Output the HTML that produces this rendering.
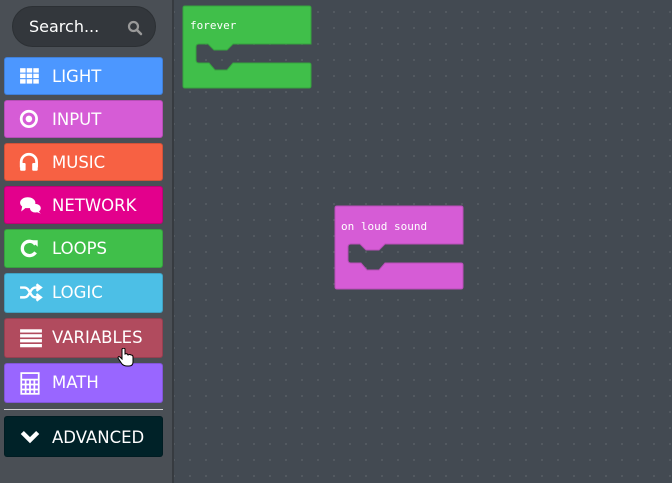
<!DOCTYPE html>
<html><head><meta charset="utf-8"><style>
body{margin:0;width:672px;height:483px;overflow:hidden;background:#434950;font-family:"Liberation Sans","DejaVu Sans",sans-serif;position:relative}
#side{position:absolute;left:0;top:0;width:172px;height:483px;background:#4a4f55;border-right:2px solid #373b40}
#ws{position:absolute;left:174px;top:0;right:0;bottom:0;background-color:#434a52;background-image:radial-gradient(circle,#575d64 0.8px,transparent 1.1px);background-size:16px 16px;background-position:8px 4px}
.search{position:absolute;left:12px;top:6px;width:144px;height:41px;border-radius:21px;background:#33373c;border:1px solid #2c3034;box-sizing:border-box;color:#fff;font-size:16px;line-height:39px;padding-left:16px;font-family:"DejaVu Sans",sans-serif}
.btn{position:absolute;left:4px;width:159px;height:38px;border-radius:3px;color:#fff;font-size:16.5px;line-height:38px;box-sizing:border-box;border:1px solid rgba(0,0,0,.15);font-family:"DejaVu Sans",sans-serif}
.btn span{position:absolute;left:47px}
.btn svg{position:absolute;left:14px;top:8px}
.sep{position:absolute;left:4px;top:409px;width:159px;height:1px;background:#d0d0d0}
.code{font-family:"DejaVu Sans Mono","Liberation Mono",monospace;font-size:11px;fill:#fff}
</style></head><body>
<div id="side">
<div class="search">Search...
<svg style="position:absolute;left:114px;top:13px" width="16" height="16" viewBox="0 0 16 16"><circle cx="6.5" cy="6.5" r="4.5" fill="none" stroke="#999" stroke-width="2.2"/><line x1="10" y1="10" x2="14" y2="14" stroke="#999" stroke-width="2.5" stroke-linecap="round"/></svg></div>
<div class="btn" style="top:57px;background:#4c97ff"><svg width="22" height="22" viewBox="0 0 20 20" fill="#fff"><rect x="1" y="2" width="5" height="4"/><rect x="7" y="2" width="5" height="4"/><rect x="13" y="2" width="5" height="4"/><rect x="1" y="7" width="5" height="4"/><rect x="7" y="7" width="5" height="4"/><rect x="13" y="7" width="5" height="4"/><rect x="1" y="12" width="5" height="4"/><rect x="7" y="12" width="5" height="4"/><rect x="13" y="12" width="5" height="4"/></svg><span>LIGHT</span></div>
<div class="btn" style="top:100px;background:#d65cd6"><svg width="22" height="22" viewBox="0 0 20 20"><circle cx="9" cy="9" r="7" fill="none" stroke="#fff" stroke-width="2.5"/><circle cx="9" cy="9" r="3" fill="#fff"/></svg><span>INPUT</span></div>
<div class="btn" style="top:143px;background:#f76143"><svg width="22" height="22" viewBox="0 0 20 20"><path d="M2,14 V9 A7,7 0 0 1 16,9 V14" fill="none" stroke="#fff" stroke-width="2.5"/><rect x="1" y="10" width="5" height="7" rx="1" fill="#fff"/><rect x="12" y="10" width="5" height="7" rx="1" fill="#fff"/></svg><span>MUSIC</span></div>
<div class="btn" style="top:186px;background:#e3008c"><svg width="24" height="22" viewBox="0 0 22 20" fill="#fff"><ellipse cx="8" cy="7" rx="7" ry="5"/><path d="M3,10 L2,15 L7,11Z"/><ellipse cx="15" cy="12" rx="5" ry="4"/><path d="M17,14 L20,17 L15,15Z"/></svg><span>NETWORK</span></div>
<div class="btn" style="top:229px;height:39px;background:#40bf4a"><svg width="22" height="22" viewBox="0 0 20 20"><path d="M15,6 A6.5,6.5 0 1 0 15,13" fill="none" stroke="#fff" stroke-width="3"/><path d="M11,2 L17,2 L17,8Z" fill="#fff"/></svg><span>LOOPS</span></div>
<div class="btn" style="top:273px;height:40px;background:#4cbfe6"><svg width="24" height="22" viewBox="0 0 22 20" fill="none" stroke="#fff" stroke-width="2.2"><path d="M1,5 H5 C10,5 10,14 15,14 H18"/><path d="M1,14 H5 C10,14 10,5 15,5 H18"/><path d="M16,2 L20,5 L16,8 M16,11 L20,14 L16,17" fill="#fff"/></svg><span>LOGIC</span></div>
<div class="btn" style="top:318px;height:40px;background:#b14b5e"><svg width="24" height="22" viewBox="0 0 22 20" fill="#fff"><rect x="1" y="2" width="20" height="3"/><rect x="1" y="6.5" width="20" height="3"/><rect x="1" y="11" width="20" height="3"/><rect x="1" y="15.5" width="20" height="3"/></svg><span>VARIABLES</span></div>
<div class="btn" style="top:363px;height:40px;background:#9966ff"><svg width="22" height="24" viewBox="0 0 20 22" fill="none" stroke="#fff" stroke-width="1.6"><rect x="2" y="1" width="16" height="19"/><path d="M2,7 H18 M2,11.5 H18 M2,16 H18 M6,7 V20 M10,7 V20 M14,7 V20"/></svg><span>MATH</span></div>
<div class="sep"></div>
<div class="btn" style="top:416px;height:41px;line-height:41px;background:#002228"><svg width="22" height="22" viewBox="0 0 20 20" style="top:10px"><path d="M3,5 L10,12 L17,5" fill="none" stroke="#fff" stroke-width="4"/></svg><span>ADVANCED</span></div>
<svg style="position:absolute;left:117px;top:348px" width="18" height="20" viewBox="0 0 18 20"><path d="M5,1 V11 L3,9 Q1,8 1,10 L5,16 Q7,18 10,18 H12 Q16,18 16,14 V9 Q16,7 14,7 Q13,6 11,7 Q10,5 8,6 V1 Q7,-0.5 5,1Z" fill="#fff" stroke="#000" stroke-width="1"/></svg>
</div>
<div id="ws"></div>
<svg style="position:absolute;left:0;top:0" width="672" height="483">
<g transform="translate(183,6)"><path d="M2,0 H126 Q128,0 128,2 V38 H50 L44,44 H31 L25,38 H16 Q13,38 13,41 V54 Q13,57 16,57 H26 L32,64 H44 L50,57 H126 Q128,57 128,59 V80 Q128,82 126,82 H2 Q0,82 0,80 V2 Q0,0 2,0Z" fill="#40bf4a" stroke="#36a33f" stroke-width="1"/><text class="code" x="7" y="23">forever</text></g>
<g transform="translate(335,206)"><path d="M2,0 H126 Q128,0 128,2 V38 H50 L44,44 H31 L25,38 H16 Q13,38 13,41 V54 Q13,57 16,57 H26 L32,64 H44 L50,57 H126 Q128,57 128,59 V81 Q128,83 126,83 H2 Q0,83 0,81 V2 Q0,0 2,0Z" fill="#d65cd6" stroke="#b84eb8" stroke-width="1"/><text class="code" x="6" y="24">on loud sound</text></g>
</svg>
</body></html>
